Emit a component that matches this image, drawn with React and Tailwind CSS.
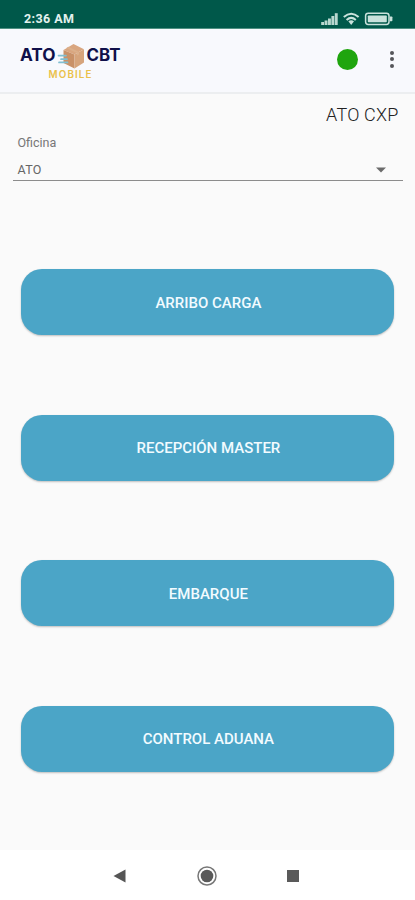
import React from "react";

const actions = ["ARRIBO CARGA", "RECEPCIÓN MASTER", "EMBARQUE", "CONTROL ADUANA"];

function StatusIcons() {
  return (
    <svg width="74" height="14" viewBox="0 0 74 14" fill="#b9d8d0">
      <rect x="0.2" y="10" width="2.9" height="3" />
      <rect x="3.6" y="8.5" width="2.9" height="4.5" />
      <rect x="7" y="6.5" width="2.9" height="6.5" />
      <rect x="10.4" y="4" width="2.9" height="9" />
      <rect x="13.8" y="1.2" width="2.9" height="11.8" />
      <g fill="none" stroke="#c9e2dc" strokeWidth="2">
        <path d="M22.8 5Q30.2-1.6 37.6 5" />
        <path d="M25.6 8Q30.2 3.8 34.8 8" />
      </g>
      <path d="M27.4 9.2Q30.2 7.2 33 9.2L30.2 13Z" fill="#c9e2dc" />
      <rect x="44.6" y="1.2" width="23.4" height="11.2" rx="2.6" fill="none" stroke="#c9e2dc" strokeWidth="1.5" />
      <rect x="46.8" y="3.4" width="19" height="6.8" rx="0.8" fill="#c9e2dc" />
      <path d="M68.8 4.4h1.8q.8 0 .8.8v3.2q0 .8-.8.8h-1.8z" fill="#c9e2dc" />
    </svg>
  );
}

function Logo() {
  return (
    <svg width="104" height="40" viewBox="0 0 104 40" fontFamily="Inter, sans-serif">
      <g fontSize="17" fontWeight="700" fill="#10104a">
        <text x="1" y="19.2" textLength="35.5" lengthAdjust="spacingAndGlyphs">ATO</text>
        <text x="67.5" y="19.2" textLength="34" lengthAdjust="spacingAndGlyphs">CBT</text>
      </g>
      <path d="M54.5 2 65 7.2 55.5 12.5 44.5 8Z" fill="#d9a680" />
      <path d="M44.5 8 55.5 12.5V26.5L44.5 21Z" fill="#c99168" />
      <path d="M65 7.2V20.5L55.5 26.5V12.5Z" fill="#d6a47c" />
      <path d="m49.4 4.8 10.6 5.1v2.6l-2 1V11L47.4 5.9Z" fill="#dcb08b" />
      <g stroke="#80bfd2" strokeWidth="1.7" strokeLinecap="round">
        <path d="M39.5 13.6h7.5M42 17.2h6M40 20.4h8.5" />
      </g>
      <text x="29.5" y="36.4" fontSize="9.8" fontWeight="600" fill="#eac14a" textLength="43">MOBILE</text>
    </svg>
  );
}

export default function App() {
  return (
    <div className="flex h-[900px] w-[415px] flex-col overflow-hidden bg-[#fafafa] font-['Roboto',sans-serif]">
      <div className="flex h-[29px] shrink-0 items-start justify-between border-b border-[#4f9083] bg-[#00584a] pr-[20px] pl-6">
        <span className="pt-[11px] text-[12.5px] leading-4 font-bold tracking-[0.4px] text-[#e3f1ee]">2:36 AM</span>
        <div className="pt-3">
          <StatusIcons />
        </div>
      </div>

      <header className="flex h-[65px] shrink-0 items-start border-b-2 border-[#eceef0] bg-[#f8f9fd] pl-[19px]">
        <div className="pt-[13px]">
          <Logo />
        </div>
        <div className="mt-[19.5px] ml-[213.5px] size-[21px] rounded-full bg-[#1fa50e]" />
        <div className="mt-[21.5px] ml-[32.5px] flex flex-col gap-[2.5px]">
          <i className="size-[4px] rounded-full bg-[#55565a]" />
          <i className="size-[4px] rounded-full bg-[#55565a]" />
          <i className="size-[4px] rounded-full bg-[#55565a]" />
        </div>
      </header>

      <main className="flex h-[756px] shrink-0 flex-col">
        <h1 className="pt-[10px] pr-[16.5px] text-right text-[18px] leading-[22px] font-light tracking-[0.2px] text-[#222]">ATO CXP</h1>
        <div className="mr-[12px] ml-[13px] h-[55px] border-b border-[#8c8c8c] pr-[17px] pl-[4.5px]">
          <div className="pt-[9px] text-[12.5px] leading-4 text-[#777]">Oficina</div>
          <div className="flex items-center justify-between pt-[11px] text-[12.5px] leading-4 tracking-[0.3px] text-[#666]">
            <span>ATO</span>
            <svg width="10" height="6" viewBox="0 0 10 6">
              <path d="M0 .5h10L5 5.5Z" fill="#6b6b6b" />
            </svg>
          </div>
        </div>
        <div className="flex flex-col gap-[79.5px] pt-[88px] pr-[20.6px] pl-[21.4px]">
          {actions.map((label) => (
            <button
              key={label}
              className="h-[66px] rounded-[21px] bg-[#4ba5c7] pt-[2px] pl-px text-[15px] font-medium text-[#f2fbff] shadow-[0_1px_2px_rgba(0,0,0,0.24)]"
            >
              {label}
            </button>
          ))}
        </div>
      </main>

      <nav className="flex h-[50px] shrink-0 items-center bg-white pt-px pl-[113px]">
        <svg width="13" height="14" viewBox="0 0 13 14">
          <path d="M.5 7 12.5.5v13Z" fill="#555" />
        </svg>
        <svg className="ml-[71px]" width="20" height="20" viewBox="0 0 20 20">
          <circle cx="10" cy="10" r="9" fill="none" stroke="#777" strokeWidth="1.5" />
          <circle cx="10" cy="10" r="6.3" fill="#5a5a5a" />
        </svg>
        <div className="ml-[70px] size-[12px] bg-[#5a5a5a]" />
      </nav>
    </div>
  );
}
